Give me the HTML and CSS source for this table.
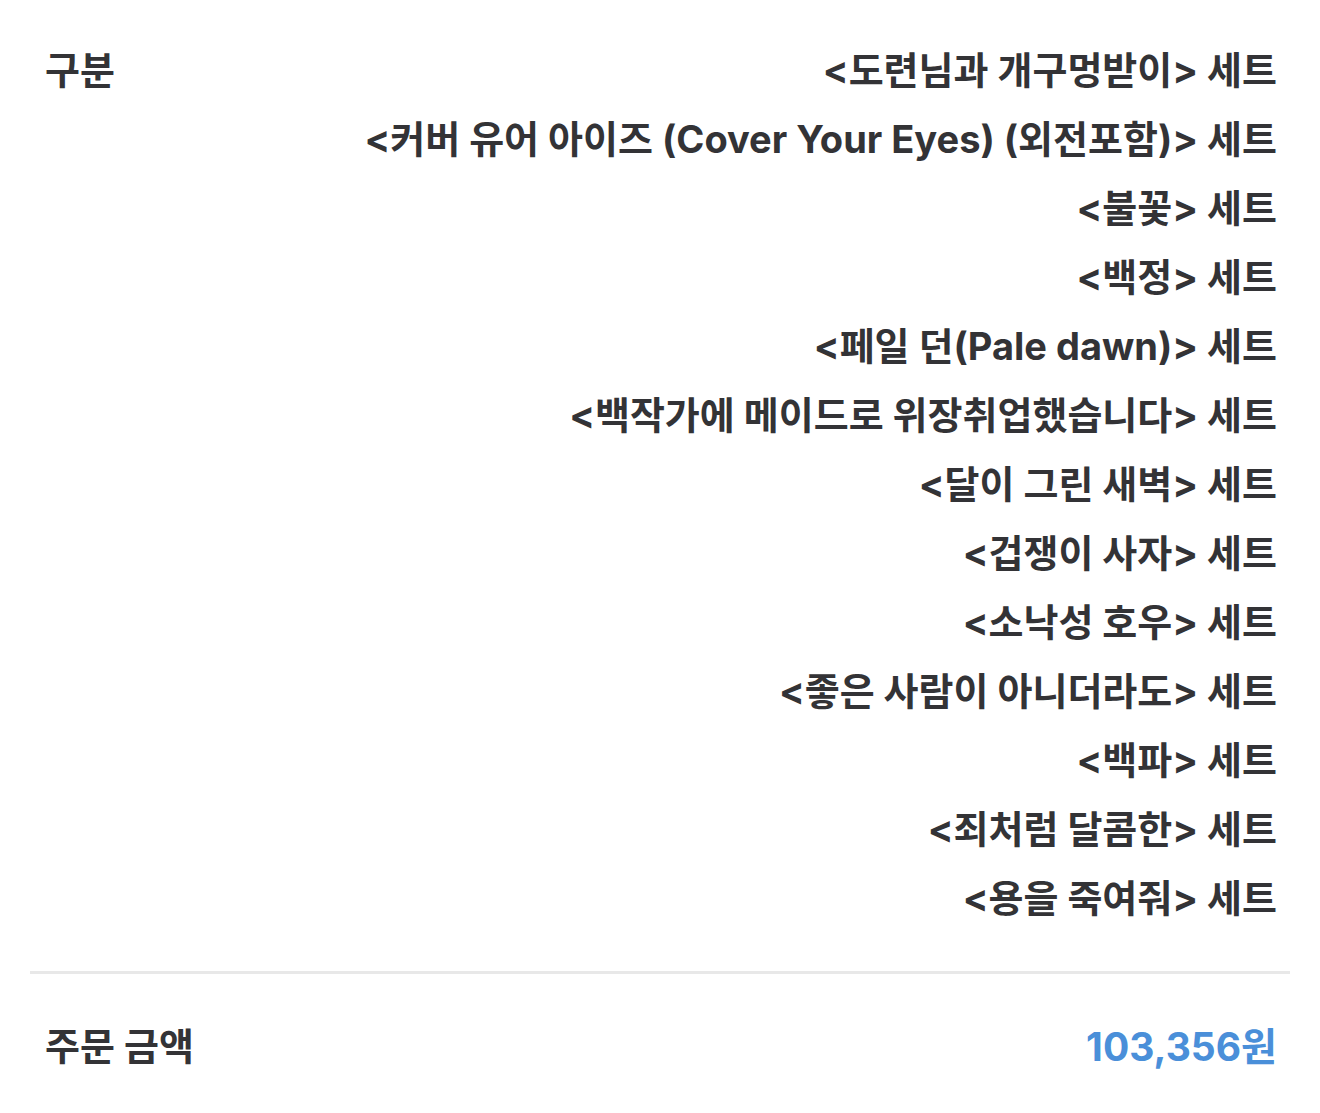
FILE: index.html
```html
<!DOCTYPE html>
<html lang="ko">
<head>
<meta charset="utf-8">
<link rel="stylesheet" href="styles.css">
</head>
<body>
<div class="summary">
  <div class="section">
    <div class="label">구분</div>
    <ul class="items">
      <li>&lt;도련님과 개구멍받이&gt; 세트</li>
      <li>&lt;커버 유어 아이즈 (Cover Your Eyes) (외전포함)&gt; 세트</li>
      <li>&lt;불꽃&gt; 세트</li>
      <li>&lt;백정&gt; 세트</li>
      <li>&lt;페일 던(Pale dawn)&gt; 세트</li>
      <li>&lt;백작가에 메이드로 위장취업했습니다&gt; 세트</li>
      <li>&lt;달이 그린 새벽&gt; 세트</li>
      <li>&lt;겁쟁이 사자&gt; 세트</li>
      <li>&lt;소낙성 호우&gt; 세트</li>
      <li>&lt;좋은 사람이 아니더라도&gt; 세트</li>
      <li>&lt;백파&gt; 세트</li>
      <li>&lt;죄처럼 달콤한&gt; 세트</li>
      <li>&lt;용을 죽여줘&gt; 세트</li>
    </ul>
  </div>
  <div class="total">
    <div class="label">주문 금액</div>
    <div class="amount">103,356원</div>
  </div>
</div>
</body>
</html>
```

FILE: styles.css
```css
html, body {
  margin: 0;
  padding: 0;
  background: #fff;
}
body {
  font-family: "Inter", "Noto Sans CJK KR", sans-serif;
  font-weight: 700;
  color: #333336;
  font-size: 38px;
  letter-spacing: 0;
}
.summary {
  margin: 0 30px;
}
.section {
  display: flex;
  justify-content: space-between;
  padding: 36px 13px 38px 15px;
  border-bottom: 3px solid #e8e8e8;
}
.label {
  line-height: 69px;
}
.items {
  list-style: none;
  margin: 0;
  padding: 0;
  text-align: right;
}
.items li {
  line-height: 69px;
}
.total {
  display: flex;
  justify-content: space-between;
  align-items: center;
  padding: 38px 13px 40px 15px;
}
.amount {
  color: #4a8fd9;
  font-size: 39px;
  line-height: 69px;
}
```
